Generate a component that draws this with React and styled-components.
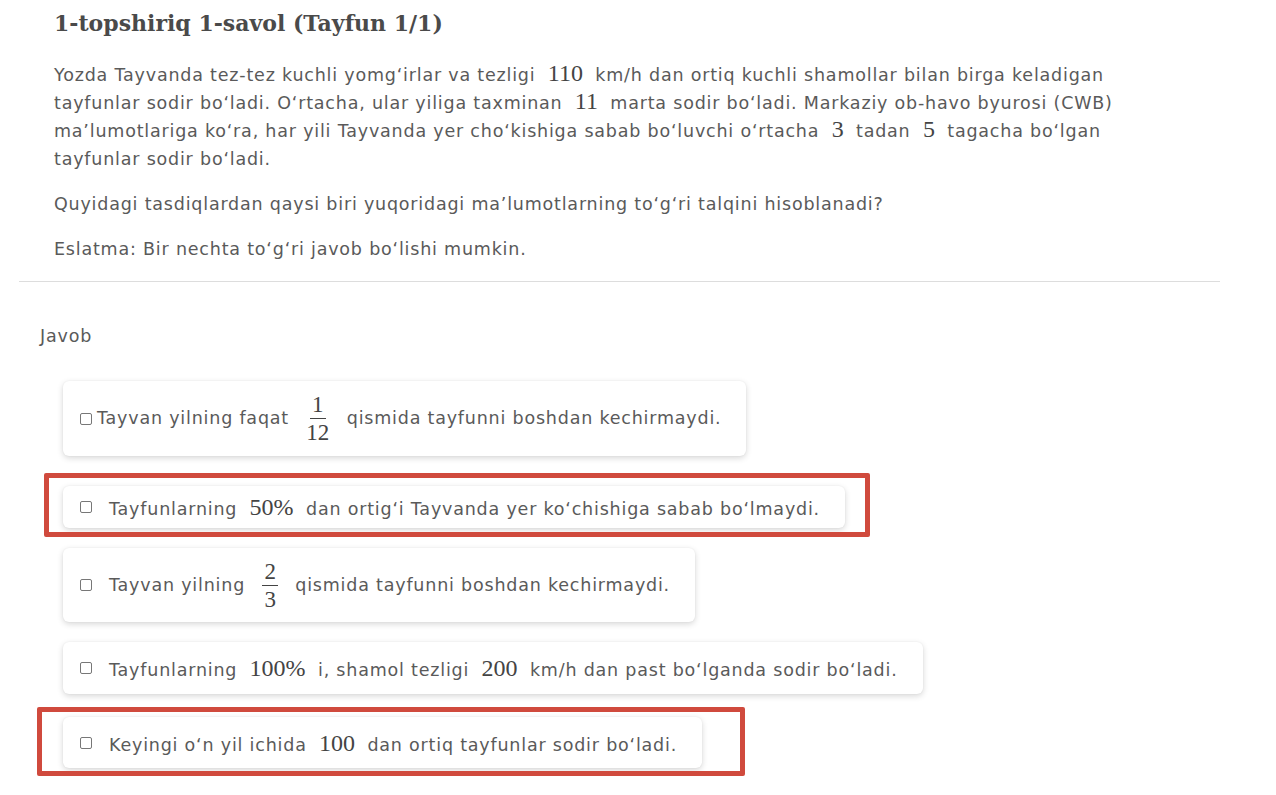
import React from 'react';
import styled, { createGlobalStyle } from 'styled-components';

const GlobalStyle = createGlobalStyle`
  html, body {
    margin: 0;
    padding: 0;
    background: #ffffff;
  }
  body {
    font-family: "DejaVu Sans", "Noto Sans", sans-serif;
    color: #5a5a5a;
  }
`;

const Page = styled.div`
  width: 1276px;
  height: 795px;
  overflow: hidden;
  padding-top: 8px;
  box-sizing: border-box;
`;

const Question = styled.section`
  padding: 0 0 0 54px;
`;

const Title = styled.h2`
  margin: 0 0 23px;
  font-family: "DejaVu Serif", "Liberation Serif", serif;
  font-size: 22px;
  font-weight: 700;
  line-height: 30px;
  color: #4a4a4a;
`;

const Para = styled.p`
  margin: 0 0 ${({ gap }) => gap || 17}px;
  font-size: 17.5px;
  letter-spacing: 0.8px;
  line-height: 28px;
  color: #5a5a5a;
  white-space: nowrap;
`;

const M = styled.span`
  font-family: "Liberation Serif", "DejaVu Serif", serif;
  font-size: 24px;
  line-height: 1;
  letter-spacing: 0;
  color: #444444;
  margin: 0 6px;
`;

const Divider = styled.hr`
  margin: 18px 56px 0 19px;
  border: 0;
  border-top: 1px solid #dddddd;
`;

const Answer = styled.section`
  padding: 42px 0 0 40px;
`;

const Label = styled.div`
  font-size: 17.5px;
  letter-spacing: 0.8px;
  color: #5a5a5a;
  line-height: 24px;
  margin-bottom: 33px;
`;

const Options = styled.div`
  display: flex;
  flex-direction: column;
  align-items: flex-start;
  padding-left: 23px;
`;

const Card = styled.div`
  position: relative;
  display: flex;
  align-items: center;
  min-height: ${({ h }) => h}px;
  margin-top: ${({ mt }) => mt}px;
  padding: 0 25px 0 17px;
  box-sizing: border-box;
  background: #ffffff;
  border-radius: 6px;
  box-shadow: 0 2px 6px rgba(0, 0, 0, 0.16), 0 0 2px rgba(0, 0, 0, 0.06);
  font-size: 17.5px;
  letter-spacing: 0.8px;
  color: #5a5a5a;
  white-space: nowrap;
`;

const Mark = styled.div`
  position: absolute;
  left: ${({ box }) => box.l}px;
  right: ${({ box }) => box.r}px;
  top: ${({ box }) => box.t}px;
  bottom: ${({ box }) => box.b}px;
  border: 5px solid #d04a3d;
  border-radius: 2px;
  pointer-events: none;
`;

const Check = styled.span`
  display: inline-block;
  width: 10px;
  height: 10px;
  border: 1px solid #777777;
  border-radius: 2px;
  margin-right: ${({ tight }) => (tight ? 5 : 17)}px;
  flex: none;
`;

const Frac = styled.span`
  display: inline-flex;
  flex-direction: column;
  align-items: center;
  vertical-align: middle;
  font-family: "Liberation Serif", "DejaVu Serif", serif;
  font-size: 23px;
  letter-spacing: 0;
  line-height: 23px;
  color: #444444;
  margin: 0 11px;
`;

const FracTop = styled.span`
  padding: 0 2px 2px;
  border-bottom: 1.5px solid #444444;
`;

const FracBottom = styled.span`
  padding-top: 2px;
`;

const Fraction = ({ n, d }) => (
  <Frac>
    <FracTop>{n}</FracTop>
    <FracBottom>{d}</FracBottom>
  </Frac>
);

const options = [
  {
    h: 75,
    mt: 0,
    tight: true,
    body: (
      <>
        Tayvan yilning faqat <Fraction n="1" d="12" /> qismida tayfunni boshdan kechirmaydi.
      </>
    ),
  },
  {
    h: 42,
    mt: 30,
    mark: { l: -19, r: -25, t: -13, b: -9 },
    body: (
      <>
        Tayfunlarning <M>50%</M> dan ortig‘i Tayvanda yer ko‘chishiga sabab bo‘lmaydi.
      </>
    ),
  },
  {
    h: 74,
    mt: 20,
    body: (
      <>
        Tayvan yilning <Fraction n="2" d="3" /> qismida tayfunni boshdan kechirmaydi.
      </>
    ),
  },
  {
    h: 52,
    mt: 20,
    body: (
      <>
        Tayfunlarning <M>100%</M> i, shamol tezligi <M>200</M> km/h dan past bo‘lganda sodir bo‘ladi.
      </>
    ),
  },
  {
    h: 51,
    mt: 23,
    mark: { l: -26, r: -43, t: -10, b: -8 },
    body: (
      <>
        Keyingi o‘n yil ichida <M>100</M> dan ortiq tayfunlar sodir bo‘ladi.
      </>
    ),
  },
];

export default function App() {
  return (
    <Page>
      <GlobalStyle />
      <Question>
        <Title>1-topshiriq 1-savol (Tayfun 1/1)</Title>
        <Para gap={17}>
          Yozda Tayvanda tez-tez kuchli yomg‘irlar va tezligi <M>110</M> km/h dan ortiq kuchli shamollar bilan birga keladigan
          <br />
          tayfunlar sodir bo‘ladi. O‘rtacha, ular yiliga taxminan <M>11</M> marta sodir bo‘ladi. Markaziy ob-havo byurosi (CWB)
          <br />
          ma’lumotlariga ko‘ra, har yili Tayvanda yer cho‘kishiga sabab bo‘luvchi o‘rtacha <M>3</M> tadan <M>5</M> tagacha bo‘lgan
          <br />
          tayfunlar sodir bo‘ladi.
        </Para>
        <Para gap={17}>Quyidagi tasdiqlardan qaysi biri yuqoridagi ma’lumotlarning to‘g‘ri talqini hisoblanadi?</Para>
        <Para gap={0}>Eslatma: Bir nechta to‘g‘ri javob bo‘lishi mumkin.</Para>
      </Question>
      <Divider />
      <Answer>
        <Label>Javob</Label>
        <Options>
          {options.map((o, i) => (
            <Card key={`opt-${i + 1}`} h={o.h} mt={o.mt}>
              <Check tight={o.tight} />
              <span>{o.body}</span>
              {o.mark && <Mark box={o.mark} />}
            </Card>
          ))}
        </Options>
      </Answer>
    </Page>
  );
}
